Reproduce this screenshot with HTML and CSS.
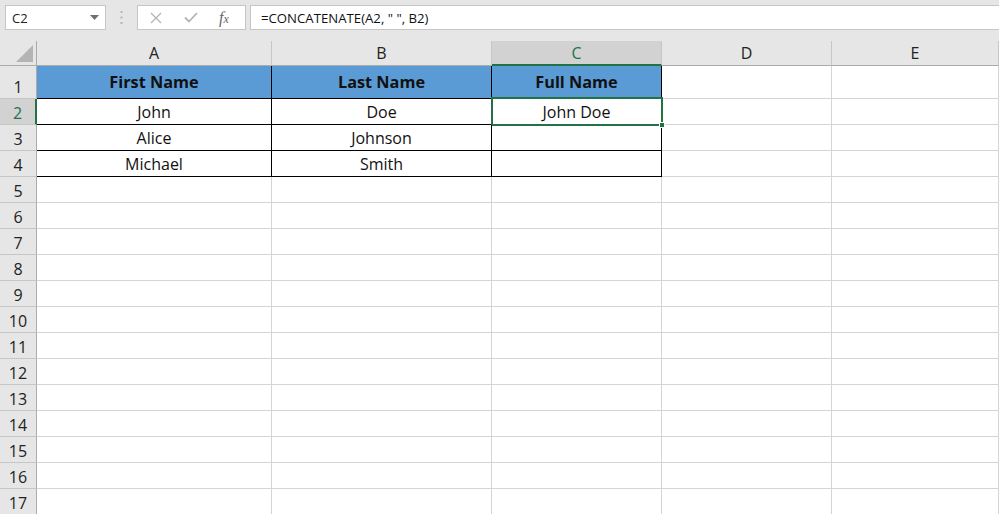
FILE: index.html
```html
<!DOCTYPE html>
<html lang="en">
<head>
<meta charset="utf-8">
<title>Concatenate</title>
<link rel="stylesheet" href="styles.css">
</head>
<body>
<div class="toolbar">
  <div class="namebox">
    <span class="nb-text">C2</span>
    <svg class="nb-arrow" width="9" height="5" viewBox="0 0 9 5"><path d="M0 0 H9 L4.5 5 Z" fill="#6f6f6f"/></svg>
  </div>
  <div class="grip">
    <svg width="3" height="15" viewBox="0 0 3 15"><rect x="0.5" y="1" width="2" height="2" fill="#b5b5b5"/><rect x="0.5" y="6.5" width="2" height="2" fill="#b5b5b5"/><rect x="0.5" y="12" width="2" height="2" fill="#b5b5b5"/></svg>
  </div>
  <div class="fxbox">
    <svg class="ic-x" width="12" height="12" viewBox="0 0 12 12"><path d="M1 1 L11 11 M11 1 L1 11" stroke="#b4b4b4" stroke-width="1.3" fill="none"/></svg>
    <svg class="ic-ok" width="14" height="11" viewBox="0 0 14 11"><path d="M1 5.5 L5 9.5 L13 1" stroke="#b4b4b4" stroke-width="1.8" fill="none"/></svg>
    <span class="ic-fx">f<span class="x">x</span></span>
  </div>
  <div class="formula">=CONCATENATE(A2, " ", B2)</div>
</div>

<div class="sheet">
  <div class="corner"><svg width="17" height="17" viewBox="0 0 17 17"><path d="M17 0 V17 H0 Z" fill="#b4b4b4"/></svg></div>
  <div class="ch">A</div>
  <div class="ch">B</div>
  <div class="ch sel">C</div>
  <div class="ch">D</div>
  <div class="ch">E</div>

  <div class="rh r1">1</div>
  <div class="c t th">First Name</div>
  <div class="c t th">Last Name</div>
  <div class="c t th">Full Name</div>
  <div class="c"></div>
  <div class="c"></div>

  <div class="rh sel">2</div>
  <div class="c t">John</div>
  <div class="c t">Doe</div>
  <div class="c t active">John Doe<span class="handle"></span></div>
  <div class="c"></div>
  <div class="c"></div>

  <div class="rh">3</div>
  <div class="c t">Alice</div>
  <div class="c t">Johnson</div>
  <div class="c t"></div>
  <div class="c"></div>
  <div class="c"></div>

  <div class="rh">4</div>
  <div class="c t">Michael</div>
  <div class="c t">Smith</div>
  <div class="c t"></div>
  <div class="c"></div>
  <div class="c"></div>

  <div class="rh">5</div><div class="c"></div><div class="c"></div><div class="c"></div><div class="c"></div><div class="c"></div>
  <div class="rh">6</div><div class="c"></div><div class="c"></div><div class="c"></div><div class="c"></div><div class="c"></div>
  <div class="rh">7</div><div class="c"></div><div class="c"></div><div class="c"></div><div class="c"></div><div class="c"></div>
  <div class="rh">8</div><div class="c"></div><div class="c"></div><div class="c"></div><div class="c"></div><div class="c"></div>
  <div class="rh">9</div><div class="c"></div><div class="c"></div><div class="c"></div><div class="c"></div><div class="c"></div>
  <div class="rh">10</div><div class="c"></div><div class="c"></div><div class="c"></div><div class="c"></div><div class="c"></div>
  <div class="rh">11</div><div class="c"></div><div class="c"></div><div class="c"></div><div class="c"></div><div class="c"></div>
  <div class="rh">12</div><div class="c"></div><div class="c"></div><div class="c"></div><div class="c"></div><div class="c"></div>
  <div class="rh">13</div><div class="c"></div><div class="c"></div><div class="c"></div><div class="c"></div><div class="c"></div>
  <div class="rh">14</div><div class="c"></div><div class="c"></div><div class="c"></div><div class="c"></div><div class="c"></div>
  <div class="rh">15</div><div class="c"></div><div class="c"></div><div class="c"></div><div class="c"></div><div class="c"></div>
  <div class="rh">16</div><div class="c"></div><div class="c"></div><div class="c"></div><div class="c"></div><div class="c"></div>
  <div class="rh">17</div><div class="c"></div><div class="c"></div><div class="c"></div><div class="c"></div><div class="c"></div>
</div>
</body>
</html>
```

FILE: styles.css
```css
* { box-sizing: border-box; }
html, body {
  margin: 0;
  padding: 0;
  width: 999px;
  height: 514px;
  overflow: hidden;
  background: #ffffff;
  font-family: "Open Sans", "Liberation Sans", sans-serif;
}

.toolbar {
  height: 41px;
  background: #e6e6e6;
  display: flex;
  align-items: flex-start;
  padding: 5px 0 0 5px;
}
.namebox {
  width: 101px;
  height: 25px;
  background: #fff;
  border: 1px solid #c6c6c6;
  display: flex;
  align-items: center;
  justify-content: space-between;
  padding: 0 6px 0 6px;
  font-size: 13px;
  color: #222;
}
.grip {
  width: 31px;
  height: 25px;
  display: flex;
  align-items: center;
  justify-content: center;
}
.fxbox {
  width: 109px;
  height: 25px;
  background: #fff;
  border: 1px solid #c6c6c6;
  display: flex;
  align-items: center;
  padding-left: 12px;
}
.ic-x { margin-right: 22px; }
.ic-ok { margin-right: 21px; }
.ic-fx {
  font-family: "Liberation Serif", "DejaVu Serif", serif;
  font-style: italic;
  font-size: 16px;
  color: #666;
  line-height: 1;
}
.ic-fx .x { font-size: 12px; }
.formula {
  flex: 1;
  margin-left: 4px;
  height: 25px;
  background: #fff;
  border: 1px solid #c6c6c6;
  border-right: none;
  font-size: 13.2px;
  color: #111;
  display: flex;
  align-items: center;
  padding-left: 10px;
}

.sheet {
  display: grid;
  grid-template-columns: 37px 235px 220px 170px 170px 1fr;
  grid-template-rows: 25px 33px repeat(16, 26px);
}
.corner {
  background: #e6e6e6;
  border-right: 1px solid #ababab;
  border-bottom: 1px solid #ababab;
  display: flex;
  align-items: flex-end;
  justify-content: flex-end;
  padding: 0 3px 3px 0;
}
.ch {
  background: #e6e6e6;
  border-right: 1px solid #c6c6c6;
  border-bottom: 1px solid #ababab;
  display: flex;
  align-items: center;
  justify-content: center;
  font-size: 16px;
  color: #222;
}
.ch.sel {
  background: #d2d2d2;
  color: #217346;
  border-bottom: 2px solid #217346;
  padding-top: 1px;
}
.rh {
  background: #e6e6e6;
  border-right: 1px solid #ababab;
  border-bottom: 1px solid #c6c6c6;
  display: flex;
  align-items: flex-end;
  justify-content: center;
  font-size: 16px;
  line-height: 20px;
  padding-bottom: 1px;
  color: #222;
}
.rh.sel {
  background: #d2d2d2;
  color: #217346;
  border-right: 2px solid #217346;
}
.c {
  border-right: 1px solid #d4d4d4;
  border-bottom: 1px solid #d4d4d4;
  display: flex;
  align-items: center;
  justify-content: center;
  font-size: 16px;
  color: #111;
  position: relative;
}
.c.t {
  border-right-color: #000;
  border-bottom-color: #000;
}
.c.th {
  background: #5b9bd5;
  font-weight: 700;
  font-size: 16.3px;
}
.c.active::after {
  content: "";
  position: absolute;
  left: -1px;
  top: -2px;
  right: -2px;
  bottom: -2px;
  border: 2px solid #217346;
  pointer-events: none;
}
.handle {
  position: absolute;
  right: -4px;
  bottom: -4px;
  width: 6px;
  height: 6px;
  background: #217346;
  border: 1px solid #fff;
  z-index: 2;
}
```
